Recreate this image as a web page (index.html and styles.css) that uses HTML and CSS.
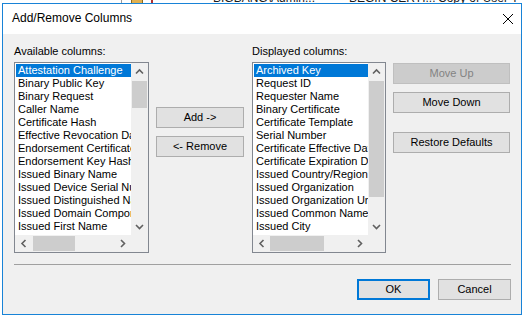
FILE: index.html
```html
<!DOCTYPE html>
<html>
<head>
<meta charset="utf-8">
<link rel="stylesheet" href="styles.css">
</head>
<body>
<div class="desktop">
  <div class="behind">
    <span class="bt bt-line"></span>
    <span class="bt bt-icon"></span>
    <span class="bt bt-red"></span>
    <span class="bt bt1">BIGBANG\Admin...</span>
    <span class="bt bt2">BEGIN CERTI...</span>
    <span class="bt bt3">Copy of User T</span>
  </div>

  <div class="dialog">
    <div class="titlebar">
      <span class="title">Add/Remove Columns</span>
      <svg class="close" width="10" height="10" viewBox="0 0 10 10"><path d="M0 0 L10 10 M10 0 L0 10" stroke="#000" stroke-width="1" fill="none"/></svg>
    </div>
    <div class="body">
      <div class="main">
        <div class="col col-left">
          <div class="label">Available columns:</div>
          <div class="listbox">
            <div class="items">
              <div class="item sel">Attestation Challenge</div>
              <div class="item">Binary Public Key</div>
              <div class="item">Binary Request</div>
              <div class="item">Caller Name</div>
              <div class="item">Certificate Hash</div>
              <div class="item">Effective Revocation Date</div>
              <div class="item">Endorsement Certificate</div>
              <div class="item">Endorsement Key Hash</div>
              <div class="item">Issued Binary Name</div>
              <div class="item">Issued Device Serial Number</div>
              <div class="item">Issued Distinguished Name</div>
              <div class="item">Issued Domain Component</div>
              <div class="item">Issued First Name</div>
            </div>
            <div class="vscroll">
              <div class="arrow"><svg width="17" height="17" viewBox="0 0 17 17"><path d="M5 10.5 L8.5 7 L12 10.5" stroke="#606060" stroke-width="1.6" fill="none"/></svg></div>
              <div class="track"><div class="vthumb vthumb-left"></div></div>
              <div class="arrow"><svg width="17" height="17" viewBox="0 0 17 17"><path d="M5 7 L8.5 10.5 L12 7" stroke="#606060" stroke-width="1.6" fill="none"/></svg></div>
            </div>
            <div class="hscroll">
              <div class="arrow"><svg width="17" height="17" viewBox="0 0 17 17"><path d="M10.5 5 L7 8.5 L10.5 12" stroke="#606060" stroke-width="1.6" fill="none"/></svg></div>
              <div class="htrack"><div class="hthumb hthumb-left"></div></div>
              <div class="arrow"><svg width="17" height="17" viewBox="0 0 17 17"><path d="M7 5 L10.5 8.5 L7 12" stroke="#606060" stroke-width="1.6" fill="none"/></svg></div>
            </div>
            <div class="corner"></div>
          </div>
        </div>

        <div class="midbtns">
          <button class="btn">Add -&gt;</button>
          <button class="btn">&lt;- Remove</button>
        </div>

        <div class="col col-right">
          <div class="label">Displayed columns:</div>
          <div class="listbox">
            <div class="items">
              <div class="item sel">Archived Key</div>
              <div class="item">Request ID</div>
              <div class="item">Requester Name</div>
              <div class="item">Binary Certificate</div>
              <div class="item">Certificate Template</div>
              <div class="item">Serial Number</div>
              <div class="item">Certificate Effective Date</div>
              <div class="item">Certificate Expiration Date</div>
              <div class="item">Issued Country/Region</div>
              <div class="item">Issued Organization</div>
              <div class="item">Issued Organization Unit</div>
              <div class="item">Issued Common Name</div>
              <div class="item">Issued City</div>
            </div>
            <div class="vscroll">
              <div class="arrow"><svg width="17" height="17" viewBox="0 0 17 17"><path d="M5 10.5 L8.5 7 L12 10.5" stroke="#606060" stroke-width="1.6" fill="none"/></svg></div>
              <div class="track"><div class="vthumb vthumb-right"></div></div>
              <div class="arrow"><svg width="17" height="17" viewBox="0 0 17 17"><path d="M5 7 L8.5 10.5 L12 7" stroke="#606060" stroke-width="1.6" fill="none"/></svg></div>
            </div>
            <div class="hscroll">
              <div class="arrow"><svg width="17" height="17" viewBox="0 0 17 17"><path d="M10.5 5 L7 8.5 L10.5 12" stroke="#606060" stroke-width="1.6" fill="none"/></svg></div>
              <div class="htrack"><div class="hthumb hthumb-right"></div></div>
              <div class="arrow"><svg width="17" height="17" viewBox="0 0 17 17"><path d="M7 5 L10.5 8.5 L7 12" stroke="#606060" stroke-width="1.6" fill="none"/></svg></div>
            </div>
            <div class="corner"></div>
          </div>
        </div>

        <div class="sidebtns">
          <button class="btn btn-wide" disabled>Move Up</button>
          <button class="btn btn-wide">Move Down</button>
          <button class="btn btn-wide btn-restore">Restore Defaults</button>
        </div>
      </div>

      <div class="sep"></div>

      <div class="footer">
        <button class="btn btn-foot btn-default">OK</button>
        <button class="btn btn-foot">Cancel</button>
      </div>
    </div>
  </div>
</div>
</body>
</html>
```

FILE: styles.css
```css
* { box-sizing: border-box; }

html, body {
  margin: 0;
  padding: 0;
  background: #ffffff;
}

.desktop {
  position: relative;
  width: 527px;
  height: 320px;
  overflow: hidden;
  background: #ffffff;
  font-family: "Liberation Sans", Arial, sans-serif;
  font-size: 11px;
  color: #000;
}

/* underlying application, mostly hidden by the dialog */
.behind .bt {
  position: absolute;
  top: -8px;
  font-size: 12px;
  line-height: 12px;
  white-space: nowrap;
  color: #1a1a1a;
}
.bt1 { left: 213px; }
.bt2 { left: 349px; }
.bt3 { left: 438px; }
.bt-line { left: 121px; width: 1px; height: 12px; background: #9a9a9a; }
.bt-icon { left: 131px; width: 12px; height: 12px; background: #e0b050; border: 1px solid #8a6a20; }
.bt-red { left: 151px; width: 2px; height: 12px; background: #b03030; }

/* dialog window */
.dialog {
  position: absolute;
  left: 2px;
  top: 3px;
  width: 520px;
  height: 312px;
  border: 1px solid #1883d7;
  background: #f0f0f0;
  display: flex;
  flex-direction: column;
}

.titlebar {
  height: 30px;
  background: #ffffff;
  display: flex;
  align-items: center;
  justify-content: space-between;
  padding: 0 8px 1px 9px;
  flex: none;
}

.title {
  font-size: 12px;
  line-height: 15px;
  color: #000;
}

.close { display: block; margin-top: 1px; }

.body {
  flex: 1;
  padding: 11px 10px 0 11px;
  display: flex;
  flex-direction: column;
}

.main {
  display: flex;
  align-items: flex-start;
}

.col { display: flex; flex-direction: column; }
.col-left { width: 135px; }
.col-right { width: 134px; margin-left: 8px; }

.label {
  line-height: 13px;
  height: 13px;
  margin-bottom: 4px;
  white-space: nowrap;
}

.listbox {
  height: 191px;
  border: 1px solid #828790;
  background: #ffffff;
  display: grid;
  grid-template-columns: 1fr 17px;
  grid-template-rows: 1fr 17px;
  overflow: hidden;
}

.items {
  padding: 1px 0 0 1px;
  overflow: hidden;
  min-width: 0;
}

.item {
  height: 13px;
  line-height: 13px;
  padding-left: 2px;
  white-space: nowrap;
  overflow: hidden;
}

.item.sel {
  background: #0078d7;
  color: #ffffff;
}

.vscroll {
  background: #f0f0f0;
  display: flex;
  flex-direction: column;
}

.arrow {
  width: 17px;
  height: 17px;
  flex: none;
}
.arrow svg { display: block; }

.track { flex: 1; position: relative; }

.vthumb {
  margin: 1px 1px 0 1px;
  background: #cdcdcd;
}
.vthumb-left { height: 27px; }
.vthumb-right { height: 116px; }

.hscroll {
  background: #f0f0f0;
  display: flex;
}

.htrack { flex: 1; }

.hthumb {
  margin: 1px 0 1px 0;
  height: 15px;
  background: #cdcdcd;
}
.hthumb-left { width: 42px; margin-left: 1px; }
.hthumb-right { width: 54px; }

.corner { background: #f0f0f0; }

/* buttons */
.btn {
  font-family: "Liberation Sans", Arial, sans-serif;
  font-size: 11px;
  color: #000;
  background: #e1e1e1;
  border: 1px solid #adadad;
  height: 21px;
  padding: 0;
  margin: 0;
  line-height: 19px;
  text-align: center;
  display: block;
}

.btn:disabled {
  background: #cccccc;
  border-color: #bfbfbf;
  color: #838383;
}

.midbtns {
  width: 88px;
  margin-left: 7px;
  padding-top: 62px;
  display: flex;
  flex-direction: column;
  gap: 8px;
}
.midbtns .btn { width: 88px; }

.sidebtns {
  margin-left: 7px;
  padding-top: 18px;
  display: flex;
  flex-direction: column;
  gap: 8px;
}
.btn-wide { width: 117px; }
.btn-restore { margin-top: 11px; }

.sep {
  margin-top: 11px;
  height: 1px;
  background: #a0a0a0;
  margin-right: 0;
}

.footer {
  margin-top: 14px;
  display: flex;
  justify-content: flex-end;
  gap: 8px;
}

.btn-foot { width: 73px; }

.btn-default {
  border: 2px solid #0078d7;
  line-height: 17px;
}
```
